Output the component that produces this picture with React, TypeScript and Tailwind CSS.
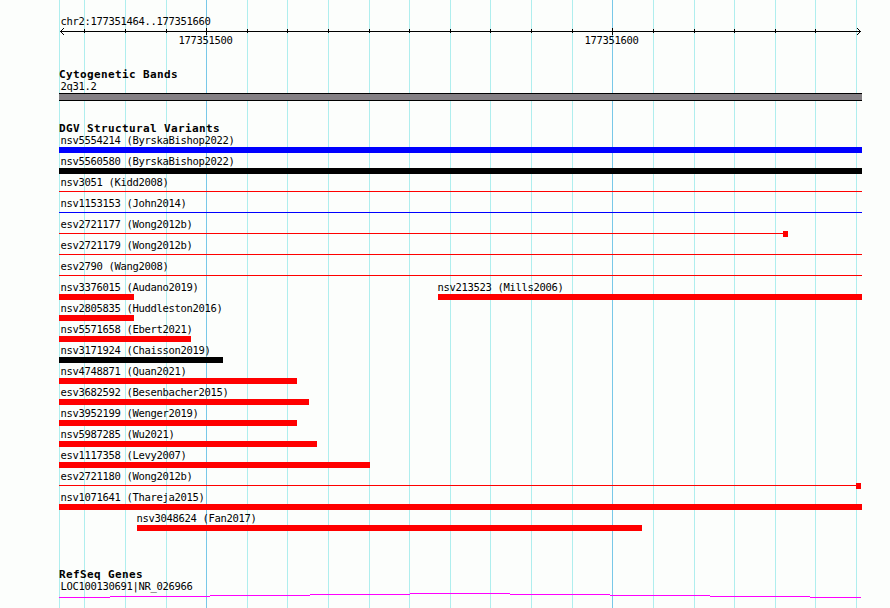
import clsx from "clsx";

type Feature = {
  label: string;
  start: number;
  end: number;
  color: string;
  kind?: "bar" | "line";
  marker?: boolean;
};

const LEFT = 59;
const RIGHT = 862;

const GRID = [
  59, 84, 125, 166, 206, 247, 287, 328, 369, 409, 450, 490, 531, 572, 612, 653,
  694, 734, 775, 815, 856,
];
const MAJOR = [206, 612];

const RED = "bg-[#ff0000]";
const BLUE = "bg-[#0000ff]";
const BLACK = "bg-black";

const ROWS: Feature[][] = [
  [{ label: "nsv5554214 (ByrskaBishop2022)", start: 59, end: 862, color: BLUE }],
  [{ label: "nsv5560580 (ByrskaBishop2022)", start: 59, end: 862, color: BLACK }],
  [{ label: "nsv3051 (Kidd2008)", start: 59, end: 862, color: RED, kind: "line" }],
  [{ label: "nsv1153153 (John2014)", start: 59, end: 862, color: BLUE, kind: "line" }],
  [{ label: "esv2721177 (Wong2012b)", start: 59, end: 788, color: RED, kind: "line", marker: true }],
  [{ label: "esv2721179 (Wong2012b)", start: 59, end: 862, color: RED, kind: "line" }],
  [{ label: "esv2790 (Wang2008)", start: 59, end: 862, color: RED, kind: "line" }],
  [
    { label: "nsv3376015 (Audano2019)", start: 59, end: 134, color: RED },
    { label: "nsv213523 (Mills2006)", start: 438, end: 862, color: RED },
  ],
  [{ label: "nsv2805835 (Huddleston2016)", start: 59, end: 134, color: RED }],
  [{ label: "nsv5571658 (Ebert2021)", start: 59, end: 191, color: RED }],
  [{ label: "nsv3171924 (Chaisson2019)", start: 59, end: 223, color: BLACK }],
  [{ label: "nsv4748871 (Quan2021)", start: 59, end: 297, color: RED }],
  [{ label: "esv3682592 (Besenbacher2015)", start: 59, end: 309, color: RED }],
  [{ label: "nsv3952199 (Wenger2019)", start: 59, end: 297, color: RED }],
  [{ label: "nsv5987285 (Wu2021)", start: 59, end: 317, color: RED }],
  [{ label: "esv1117358 (Levy2007)", start: 59, end: 370, color: RED }],
  [{ label: "esv2721180 (Wong2012b)", start: 59, end: 861, color: RED, kind: "line", marker: true }],
  [{ label: "nsv1071641 (Thareja2015)", start: 59, end: 862, color: RED }],
  [{ label: "nsv3048624 (Fan2017)", start: 137, end: 642, color: RED }],
];

function GridLines() {
  return (
    <svg className="absolute inset-0" width="890" height="608" shapeRendering="crispEdges">
      {GRID.map((x) => (
        <rect key={x} x={x} y="0" width="1" height="608" fill={MAJOR.includes(x) ? "#78c8e8" : "#afeeee"} />
      ))}
    </svg>
  );
}

function Ruler() {
  return (
    <svg className="block" width="890" height="7" shapeRendering="crispEdges">
      <rect x="60" y="3" width="801" height="1" />
      {GRID.slice(1, -1).map((x) =>
        MAJOR.includes(x) ? (
          <rect key={x} x={x} y="0" width="1" height="7" />
        ) : (
          <rect key={x} x={x} y="1" width="1" height="4" />
        )
      )}
      {[1, 2, 3].map((d) => (
        <g key={d}>
          <rect x={60 + d} y={3 - d} width="1" height="1" />
          <rect x={60 + d} y={3 + d} width="1" height="1" />
          <rect x={860 - d} y={3 - d} width="1" height="1" />
          <rect x={860 - d} y={3 + d} width="1" height="1" />
        </g>
      ))}
    </svg>
  );
}

function Label({ children }: { children: string }) {
  return (
    <div className="h-[13px] whitespace-pre pl-[0.5px] text-[10.5px] leading-[13px] tracking-[-0.321px]">
      {children}
    </div>
  );
}

function TrackTitle({ children }: { children: string }) {
  return (
    <h2 className="h-[13px] pl-[59px] whitespace-pre text-[11px] font-bold leading-[13px] tracking-[0.378px]">
      {children}
    </h2>
  );
}

function Glyph({ feature }: { feature: Feature }) {
  const { color, kind = "bar", marker } = feature;

  if (kind === "bar") return <div className={clsx("h-[6px]", color)} />;

  return (
    <div className="flex h-[6px]">
      <div className={clsx("mt-[2px] h-px flex-1", color)} />
      {marker && <div className={clsx("h-[6px] w-[5px]", color)} />}
    </div>
  );
}

function FeatureRow({ features }: { features: Feature[] }) {
  return (
    <div className="flex h-[21px]">
      {features.map((f, i) => {
        const prev = i === 0 ? 0 : features[i - 1].end;
        return (
          <div
            key={f.label}
            className="shrink-0"
            style={{ marginLeft: f.start - prev, width: f.end - f.start }}
          >
            <div className={f.start === LEFT ? "pl-px" : "-ml-px"}>
              <Label>{f.label}</Label>
            </div>
            <Glyph feature={f} />
          </div>
        );
      })}
    </div>
  );
}

function GeneLine() {
  const steps = [LEFT, 110, 210, 310, 410, 510, 610, 710, 810, RIGHT - 1];
  const levels = [4, 3, 2, 1, 0, 1, 2, 3, 4];

  return (
    <svg className="block" width="890" height="5" shapeRendering="crispEdges">
      {levels.map((y, i) => (
        <rect key={i} x={steps[i]} y={y} width={steps[i + 1] - steps[i]} height="1" fill="#ff00ff" />
      ))}
    </svg>
  );
}

export default function App() {
  return (
    <div className="relative h-[608px] w-[890px] overflow-hidden bg-[#fcfefc] font-['DejaVu_Sans_Mono','Liberation_Mono',monospace] text-black">
      <GridLines />

      <div className="relative flex flex-col">
        <header className="pt-[15px]">
          <div className="pl-[60px]">
            <Label>chr2:177351464..177351660</Label>
          </div>
          <Ruler />
          <div className="-mt-px flex pl-[178px]">
            <div className="w-[406px]">
              <Label>177351500</Label>
            </div>
            <Label>177351600</Label>
          </div>
        </header>

        <section className="mt-[21px]">
          <TrackTitle>Cytogenetic Bands</TrackTitle>
          <div className="-mt-px pl-[60px]">
            <Label>2q31.2</Label>
          </div>
          <div className="ml-[59px] h-[8px] w-[803px] border-y border-black bg-[#848084]" />
        </section>

        <section className="mt-[21px]">
          <TrackTitle>DGV Structural Variants</TrackTitle>
          <div className="-mt-px">
            {ROWS.map((features) => (
              <FeatureRow key={features[0].label} features={features} />
            ))}
          </div>
        </section>

        <section className="mt-[35px]">
          <TrackTitle>RefSeq Genes</TrackTitle>
          <div className="-mt-px pl-[60px]">
            <Label>LOC100130691|NR_026966</Label>
          </div>
          <GeneLine />
        </section>
      </div>
    </div>
  );
}
